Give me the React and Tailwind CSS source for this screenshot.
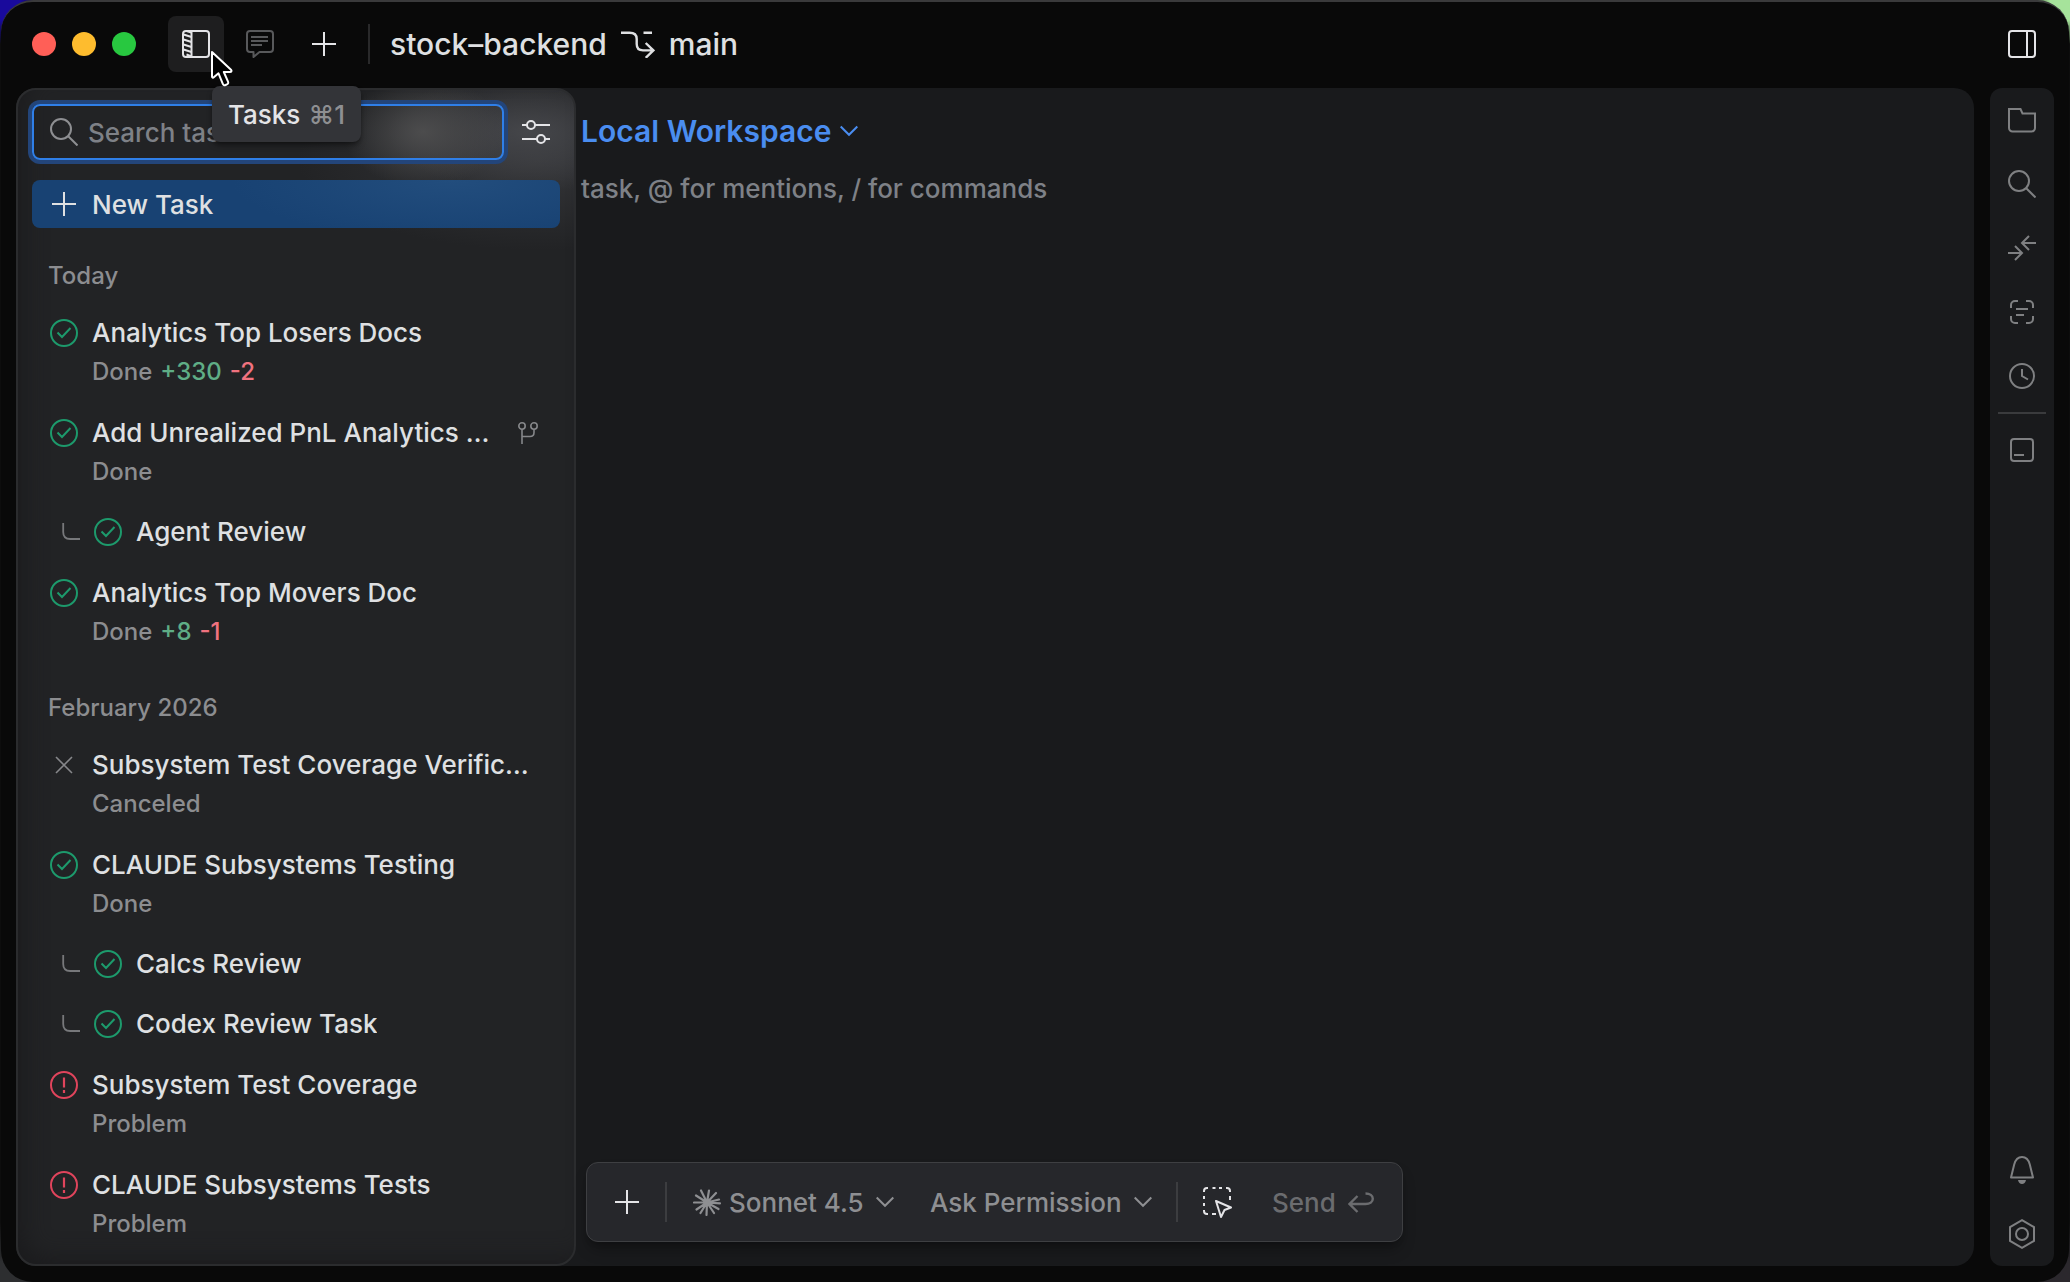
// src/App.jsx
import React from "react";

/* ---------- Icons ---------- */

/**
 * Base wrapper for the stroked icons.
 *
 * @param {object} props
 * @param {number} props.w - Drawing width, also used for the viewBox.
 * @param {number} props.h - Drawing height, also used for the viewBox.
 */
function Icon({ w = 28, h = 28, className = "", children }) {
  return (
    <svg
      width={w}
      height={h}
      viewBox={`0 0 ${w} ${h}`}
      fill="none"
      stroke="currentColor"
      strokeWidth="2"
      className={`shrink-0 ${className}`}
      aria-hidden="true"
    >
      {children}
    </svg>
  );
}

const TasksIcon = () => (
  <Icon>
    <rect x="1" y="1" width="26" height="26" rx="3" />
    <path d="M9.5 1v26" />
    <path d="M1.5 4.5l8 2.5M1.5 9.5l8 2.5M1.5 14.5l8 2.5M1.5 19.5l8 2.5M4.5 24.5l5 2M4.5 1l5 1.5" />
  </Icon>
);

const ChatIcon = () => (
  <Icon>
    <path
      strokeLinejoin="round"
      d="M4 1h20a3 3 0 013 3v15a3 3 0 01-3 3H13.5L7.5 27v-5H4a3 3 0 01-3-3V4a3 3 0 013-3z"
    />
    <path d="M5 7h17M5 11h17M5 15h11" />
  </Icon>
);

const PlusIcon = () => (
  <Icon w={24} h={24}>
    <path d="M12 0v24M0 12h24" />
  </Icon>
);

const BranchIcon = () => (
  <Icon w={34} h={28}>
    <path
      strokeWidth="2.4"
      d="M0 2.8h8.5c4.500 0 7.200 2.200 7.200 6.200v5c0 4 2.300 6.400 6.300 6.400h11M24.700 13l7.700 7.400-7.700 7.400M22.500 2.800h8.500"
    />
  </Icon>
);

const PanelRightIcon = () => (
  <Icon>
    <rect x="1" y="1" width="26" height="26" rx="3" />
    <path d="M19 1v26" />
  </Icon>
);

const SearchIcon = () => (
  <Icon>
    <circle cx="11" cy="11" r="10" />
    <path d="M18 18l9.500 9.500" />
  </Icon>
);

const FilterIcon = () => (
  <Icon>
    <path d="M0 7h5M13 7h15M0 21h15M23 21h5" />
    <circle cx="9" cy="7" r="4" />
    <circle cx="19" cy="21" r="4" />
  </Icon>
);

const ChevronIcon = () => (
  <Icon w={18} h={12}>
    <path d="M.7 1.500L9 9.800l8.300-8.300" />
  </Icon>
);

const DoneIcon = () => (
  <Icon className="text-[#1d9a6c]">
    <circle cx="14" cy="14" r="13" />
    <path d="M7.500 13.500l4.500 4.500 8.500-9" />
  </Icon>
);

const ProblemIcon = () => (
  <Icon className="text-[#e0445c]">
    <circle cx="14" cy="14" r="13" />
    <path strokeWidth="2.200" d="M14 6.500v10M14 19v3" />
  </Icon>
);

const CanceledIcon = () => (
  <Icon className="text-[#86878a]">
    <path strokeWidth="1.600" d="M6 6l16 16M22 6L6 22" />
  </Icon>
);

const ForkIcon = () => (
  <Icon w={20} h={22} className="text-[#86878a]">
    <circle cx="4" cy="4" r="3.200" strokeWidth="1.600" />
    <circle cx="16" cy="4" r="3.200" strokeWidth="1.600" />
    <path strokeWidth="1.600" d="M4 7.200V22M16 7.200v3.300c0 2.500-1.500 4-4 4H4" />
  </Icon>
);

const ConnectorIcon = () => (
  <Icon w={18} h={18} className="text-[#77787b]">
    <path strokeWidth="1.800" d="M1.200 0v9c0 4.500 2.500 7 7 7H18" />
  </Icon>
);

const ClaudeIcon = () => (
  <Icon>
    <path
      strokeWidth="2.200"
      strokeLinecap="round"
      d="M14 14.500L8 2.500M14 14.500l2-12M14 14.500l9-9.500M14 14.500l12-3M14 14.500l13 .800M14 14.500l11.500 6.500M14 14.500l7 10.500M14 14.500l-.5 12.500M14 14.500L7.500 25M14 14.500L3.500 21.500M14 14.500H1M14 14.500L3 7.500"
    />
  </Icon>
);

const SelectElementIcon = () => (
  <Icon w={30} h={32}>
    <path d="M2 6V5a3 3 0 013-3h1M10.500 2h3M17 2h3M24 2h1a3 3 0 013 3v1M28 10v4M2 10v3M2 17v3M2 24v1a3 3 0 003 3h1M10 28h4" />
    <path strokeLinejoin="round" d="M14 15l15 6.500-6.500 2.500-3.500 7z" />
  </Icon>
);

const ReturnIcon = () => (
  <Icon w={26} h={22}>
    <path strokeWidth="2.400" d="M17.500 2.500c4.500 0 7.300 2.200 7.300 5.200s-2.800 5.300-7.300 5.300H2M9.500 5L1.500 13l8 8" />
  </Icon>
);

const FolderIcon = () => (
  <Icon>
    <path d="M1 3h11.500l2 4.500H27V22a3.500 3.500 0 01-3.500 3.500h-19A3.500 3.500 0 011 22z" />
  </Icon>
);

const MergeArrowsIcon = () => (
  <Icon>
    <path d="M28 9H14M21 2l-7 7 7 7M0 19h14M7 12l7 7-7 7" />
  </Icon>
);

const ScanIcon = () => (
  <Icon>
    <path d="M3 10V7a4 4 0 014-4h3M18 3h3a4 4 0 014 4v3M25 18v3a4 4 0 01-4 4h-3M10 25H7a4 4 0 01-4-4v-3M8 11h12M8 17h8" />
  </Icon>
);

const ClockIcon = () => (
  <Icon>
    <circle cx="14" cy="14" r="12" />
    <path d="M14 7v7l6 3.500" />
  </Icon>
);

const TerminalIcon = () => (
  <Icon>
    <rect x="3" y="3" width="22" height="22" rx="3" />
    <path d="M6 19h10" />
  </Icon>
);

const BellIcon = () => (
  <Icon>
    <path d="M3 21.500L6.200 8.500C7.500 3.500 10.300 1 14 1s6.500 2.500 7.800 7.500L25 21.500z" strokeLinejoin="round" />
    <path d="M10 24h8c-.5 2.400-2 4-4 4s-3.500-1.600-4-4z" fill="currentColor" stroke="none" />
  </Icon>
);

const SettingsIcon = () => (
  <Icon w={28} h={30}>
    <path d="M14 1.200l12 6.900v13.800l-12 6.900-12-6.900V8.100z" />
    <circle cx="14" cy="15" r="6" />
  </Icon>
);

const CursorIcon = () => (
  <svg width="24" height="38" viewBox="0 0 24 38" aria-hidden="true">
    <path
      d="M2 2v24.500c0 1 1 1.500 1.800.800l4.700-4 4.300 10.500c.5 1.300 1.500 1.700 2.700 1.200l1.500-.7c1.200-.5 1.500-1.500 1-2.700L13.800 22h6.200c1.500 0 2-1.200 1-2.200z"
      fill="#000"
      stroke="#fff"
      strokeWidth="2"
      strokeLinejoin="round"
    />
  </svg>
);

/* ---------- Data ---------- */

const taskGroups = [
  {
    label: "Today",
    tasks: [
      { id: 1, title: "Analytics Top Losers Docs", status: "Done", added: "+330", removed: "-2" },
      { id: 2, title: "Add Unrealized PnL Analytics …", status: "Done", forked: true },
      { id: 3, title: "Agent Review", status: "Done", child: true },
      { id: 4, title: "Analytics Top Movers Doc", status: "Done", added: "+8", removed: "-1" },
    ],
  },
  {
    label: "February 2026",
    tasks: [
      { id: 5, title: "Subsystem Test Coverage Verific…", status: "Canceled" },
      { id: 6, title: "CLAUDE Subsystems Testing", status: "Done" },
      { id: 7, title: "Calcs Review", status: "Done", child: true },
      { id: 8, title: "Codex Review Task", status: "Done", child: true },
      { id: 9, title: "Subsystem Test Coverage", status: "Problem" },
      { id: 10, title: "CLAUDE Subsystems Tests", status: "Problem" },
    ],
  },
];

const statusIcons = {
  Done: DoneIcon,
  Problem: ProblemIcon,
  Canceled: CanceledIcon,
};

const railTools = [
  { label: "Files", icon: FolderIcon },
  { label: "Search", icon: SearchIcon },
  { label: "Changes", icon: MergeArrowsIcon },
  { label: "Preview", icon: ScanIcon },
  { label: "History", icon: ClockIcon },
];

/* ---------- Components ---------- */

function Divider() {
  return <div className="h-10 w-0.5 shrink-0 bg-[#3c3d40]" />;
}

function TitleBar() {
  return (
    <header className="flex h-[86px] shrink-0 items-center pb-0.5 pl-[31px] pr-[33px]">
      <div className="flex gap-4">
        <span className="size-6 rounded-full bg-[#ff5f57]" />
        <span className="size-6 rounded-full bg-[#febc2e]" />
        <span className="size-6 rounded-full bg-[#28c840]" />
      </div>

      <div className="ml-8 flex items-center gap-2">
        <div className="relative">
          <button
            type="button"
            aria-label="Tasks"
            className="flex size-14 items-center justify-center rounded-lg bg-[#1e1e1f] text-[#e4e4e7]"
          >
            <TasksIcon />
          </button>
          {/* Tooltip and pointer float over the sidebar */}
          <div
            role="tooltip"
            className="absolute left-11 top-[70px] z-20 flex h-14 items-center gap-2 whitespace-nowrap rounded-lg bg-[#333438] px-4 shadow-md shadow-black/40"
          >
            <span className="text-[#e4e4e7]">Tasks</span>
            <span className="text-[#8e8f92]">⌘1</span>
          </div>
          <div className="pointer-events-none absolute left-[42px] top-[34px] z-30">
            <CursorIcon />
          </div>
        </div>
        <button
          type="button"
          aria-label="Chat"
          className="flex size-14 items-center justify-center text-[#58595b]"
        >
          <ChatIcon />
        </button>
        <button
          type="button"
          aria-label="New"
          className="flex size-14 items-center justify-center text-[#e4e4e7]"
        >
          <PlusIcon />
        </button>
      </div>

      <div className="ml-4 h-10 w-0.5 bg-[#29292a]" />

      <div className="ml-5 flex items-center gap-3.5 text-[30px] text-[#dfe0e2]">
        <span>stock–backend</span>
        <BranchIcon />
        <span>main</span>
      </div>

      <button type="button" aria-label="Toggle panel" className="ml-auto text-[#e4e4e7]">
        <PanelRightIcon />
      </button>
    </header>
  );
}

function TaskRow({ task }) {
  const StatusIcon = statusIcons[task.status];

  return (
    <li>
      <button
        type="button"
        className={`flex w-full gap-3.5 px-[18px] text-left ${task.child ? "py-2.5" : "py-[11px]"}`}
      >
        {task.child && (
          <span className="flex h-10 w-[30px] items-center justify-end">
            <ConnectorIcon />
          </span>
        )}
        <span className="flex h-10 items-center">
          <StatusIcon />
        </span>
        <span className="min-w-0 flex-1">
          <span className="flex items-center justify-between leading-10">
            <span className="truncate text-[#dfe0e2]">{task.title}</span>
            {task.forked && (
              <span className="mr-1">
                <ForkIcon />
              </span>
            )}
          </span>
          {!task.child && (
            <span className="flex gap-2 text-2xl leading-[38px] text-[#8c8d90]">
              <span>{task.status}</span>
              {task.added && <span className="text-[#5fad86]">{task.added}</span>}
              {task.removed && <span className="text-[#f0727f]">{task.removed}</span>}
            </span>
          )}
        </span>
      </button>
    </li>
  );
}

function Sidebar() {
  return (
    <aside className="flex w-[560px] shrink-0 flex-col rounded-[20px] border-2 border-[#2b2c2e] bg-[#222325] bg-[radial-gradient(ellipse_80px_55px_at_405px_42px,#4c4c4d,transparent),radial-gradient(ellipse_140px_60px_at_510px_42px,#45464a,transparent),radial-gradient(ellipse_240px_90px_at_520px_70px,#343538,transparent)] px-3.5 pt-3.5 shadow-[inset_12px_-12px_24px_-8px_#1b1b1d]">
      <div className="flex items-center">
        <label className="flex h-14 w-[472px] items-center gap-2.5 rounded-lg border-2 border-[#2f7fe8] px-4 text-[#8e8f92] ring-4 ring-[#23457a]">
          <SearchIcon />
          <input
            type="text"
            aria-label="Search tasks"
            placeholder="Search tasks"
            className="min-w-0 flex-1 bg-transparent text-[#dfe0e2] outline-none placeholder:text-[#7e8187]"
          />
        </label>
        <button
          type="button"
          aria-label="Filter tasks"
          className="ml-[18px] text-[#e4e4e7]"
        >
          <FilterIcon />
        </button>
      </div>

      <button
        type="button"
        className="mt-5 flex h-12 items-center gap-4 rounded-lg bg-[#184273] bg-[radial-gradient(ellipse_220px_60px_at_420px_0px,#224d7d,transparent)] px-5 text-[#dfe0e2]"
      >
        <PlusIcon />
        New Task
      </button>

      <nav aria-label="Tasks" className="pt-0.5">
        {taskGroups.map((group) => (
          <section key={group.label}>
            <h2 className="px-4 pb-2 pt-7 text-2xl leading-9 text-[#8c8d90]">{group.label}</h2>
            <ul>
              {group.tasks.map((task) => (
                <TaskRow key={task.id} task={task} />
              ))}
            </ul>
          </section>
        ))}
      </nav>
    </aside>
  );
}

function Dropdown({ label, value, className = "gap-3" }) {
  return (
    <span className={`flex items-center ${className}`}>
      <select aria-label={label} className="appearance-none bg-transparent outline-none">
        <option>{value}</option>
      </select>
      <ChevronIcon />
    </span>
  );
}

function Workspace() {
  return (
    <main className="flex min-w-0 flex-1 flex-col pb-6">
      <div className="flex pl-[5px] pt-[23px] text-[30px] font-semibold leading-10 text-[#4a8df0]">
        <Dropdown label="Workspace" value="Local Workspace" className="gap-2" />
      </div>
      <textarea
        aria-label="Task description"
        placeholder="task, @ for mentions, / for commands"
        className="mt-[18px] flex-1 resize-none bg-transparent pl-[5px] leading-10 text-[#dfe0e2] outline-none placeholder:text-[#7e8187]"
      />

      <div className="ml-2.5 flex h-20 items-center self-start rounded-xl border border-[#3e3f42] bg-[#26272b] px-7 text-[#8e8f92] shadow-lg shadow-black/30">
        <button type="button" aria-label="Attach" className="mr-[26px] text-[#e4e4e7]">
          <PlusIcon />
        </button>
        <Divider />
        <div className="ml-[26px] flex items-center gap-2">
          <ClaudeIcon />
          <Dropdown label="Model" value="Sonnet 4.5" />
        </div>
        <div className="ml-9 mr-6">
          <Dropdown label="Permission mode" value="Ask Permission" />
        </div>
        <Divider />
        <button type="button" aria-label="Select element" className="ml-6 text-[#e4e4e7]">
          <SelectElementIcon />
        </button>
        <button type="button" className="ml-10 flex items-center gap-3 text-[#6b6c6f]">
          Send
          <ReturnIcon />
        </button>
      </div>
    </main>
  );
}

function RailButton({ label, icon: RailIcon }) {
  return (
    <button
      type="button"
      aria-label={label}
      className="flex h-16 w-full shrink-0 items-center justify-center"
    >
      <RailIcon />
    </button>
  );
}

function ToolRail() {
  return (
    <aside
      aria-label="Tools"
      className="flex w-16 shrink-0 flex-col items-center rounded-xl bg-[#191a1c] text-[#7f8082]"
    >
      {railTools.map((tool) => (
        <RailButton key={tool.label} label={tool.label} icon={tool.icon} />
      ))}
      <div className="my-1 h-0.5 w-12 bg-[#3a3b3d]" />
      <RailButton label="Terminal" icon={TerminalIcon} />
      <div className="mt-auto w-full">
        <RailButton label="Notifications" icon={BellIcon} />
        <RailButton label="Settings" icon={SettingsIcon} />
      </div>
    </aside>
  );
}

export default function App() {
  return (
    <div className="h-screen bg-[#0d0d0d] bg-[radial-gradient(circle_at_0_0,#190a9c_20px,transparent_44px),radial-gradient(circle_at_100%_0,#a6e39b_20px,transparent_44px),radial-gradient(circle_at_0_100%,#2d2e30_20px,transparent_60px),radial-gradient(circle_at_100%_100%,#2b282d_20px,transparent_60px)] px-px font-['Inter',sans-serif] text-[26px] font-medium">
      <div className="flex h-full flex-col rounded-[32px] border-t-2 border-[#3a3a3b] bg-[#090909]">
        <TitleBar />
        <div className="flex min-h-0 flex-1 gap-4 px-[15px] pb-4">
          <div className="flex min-w-0 flex-1 rounded-[20px] bg-[#191a1c]">
            <Sidebar />
            <Workspace />
          </div>
          <ToolRail />
        </div>
      </div>
    </div>
  );
}
